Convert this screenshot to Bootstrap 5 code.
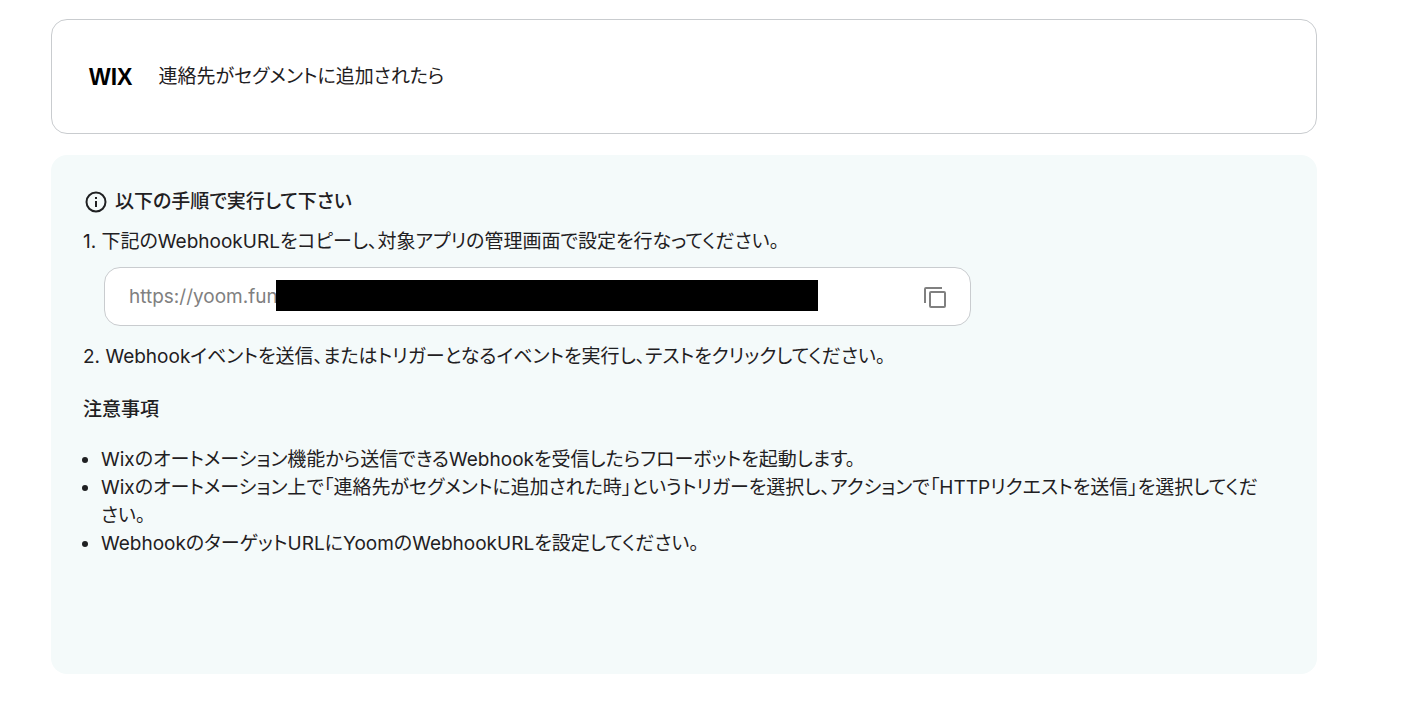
<!DOCTYPE html>
<html lang="ja">
<head>
<meta charset="utf-8">
<meta name="viewport" content="width=device-width, initial-scale=1">
<title>Webhook設定</title>
<link href="https://cdn.jsdelivr.net/npm/bootstrap@5.3.0/dist/css/bootstrap.min.css" rel="stylesheet">
<style>
body { font-family: Inter, "Noto Sans CJK JP", sans-serif; font-size: 19px; line-height: 28px; color: #1f2022; font-feature-settings: "palt"; }
.page { padding: 19px 111px 42px 51px; }
.trigger { border: 1px solid #c9cccf; border-radius: 16px; min-height: 115px; padding: 0 37px; gap: 26px; }
.brand { font: bold 23px/28px "Liberation Sans", sans-serif; color: #000; }
.guide { background: #f4fafa; border-radius: 16px; margin-top: 21px; padding: 33px 48px 116px 32px; }
.guide-head { padding-left: 1px; gap: 7px; }
.title-text { font-size: 19px; font-weight: 500; line-height: 28px; margin: 0; }
.notes-title { padding-top: 25px; }
.steps { list-style: none; margin: 12px 0 0; padding: 0; }
.url-box { background: #fff; border: 1px solid #c9cccf; border-radius: 16px; width: 867px; max-width: 100%; height: 59px; margin: 11px 0 17px 21px; padding: 0 23px 0 24px; }
.url-input { border: 0; outline: 0; padding: 0; width: 147px; color: #808080; background: transparent; }
.redacted { background: #000; height: 31px; flex: 0 1 542px; margin-bottom: 2px; }
.notes { margin: 22px 0 0; padding-left: 18px; }
</style>
</head>
<body>
<main class="page">
<section class="trigger d-flex align-items-center">
<span class="brand">WIX</span>
<span>連絡先がセグメントに追加されたら</span>
</section>
<section class="guide">
<div class="guide-head d-flex align-items-center"><svg width="24" height="24" viewBox="0 0 24 24" fill="none" stroke="#1f2022" stroke-width="2"><circle cx="12" cy="12" r="9.500"/><path d="M12 11v6M12 7v2"/></svg><h1 class="title-text">以下の手順で実行して下さい</h1></div>
<ol class="steps">
<li><label for="url">1. 下記のWebhookURLをコピーし、対象アプリの管理画面で設定を行なってください。</label>
<div class="url-box d-flex align-items-center"><input id="url" class="url-input" value="https://yoom.fun" readonly><span class="redacted"></span><button type="button" class="btn p-0 border-0 ms-auto d-flex" aria-label="コピー"><svg width="24" height="24" viewBox="0 0 24 24" fill="none" stroke="#808080" stroke-width="2"><rect x="7" y="7" width="15" height="15" rx="1"/><path d="M2 18V4q0-1 1-1H19"/></svg></button></div></li>
<li>2. Webhookイベントを送信、またはトリガーとなるイベントを実行し、テストをクリックしてください。</li>
</ol>
<h2 class="title-text notes-title">注意事項</h2>
<ul class="notes">
<li>Wixのオートメーション機能から送信できるWebhookを受信したらフローボットを起動します。</li>
<li>Wixのオートメーション上で「連絡先がセグメントに追加された時」というトリガーを選択し、アクションで「HTTPリクエストを送信」を選択してください。</li>
<li>WebhookのターゲットURLにYoomのWebhookURLを設定してください。</li>
</ul>
</section>
</main>
<script src="https://cdn.jsdelivr.net/npm/bootstrap@5.3.0/dist/js/bootstrap.bundle.min.js"></script>
</body>
</html>
